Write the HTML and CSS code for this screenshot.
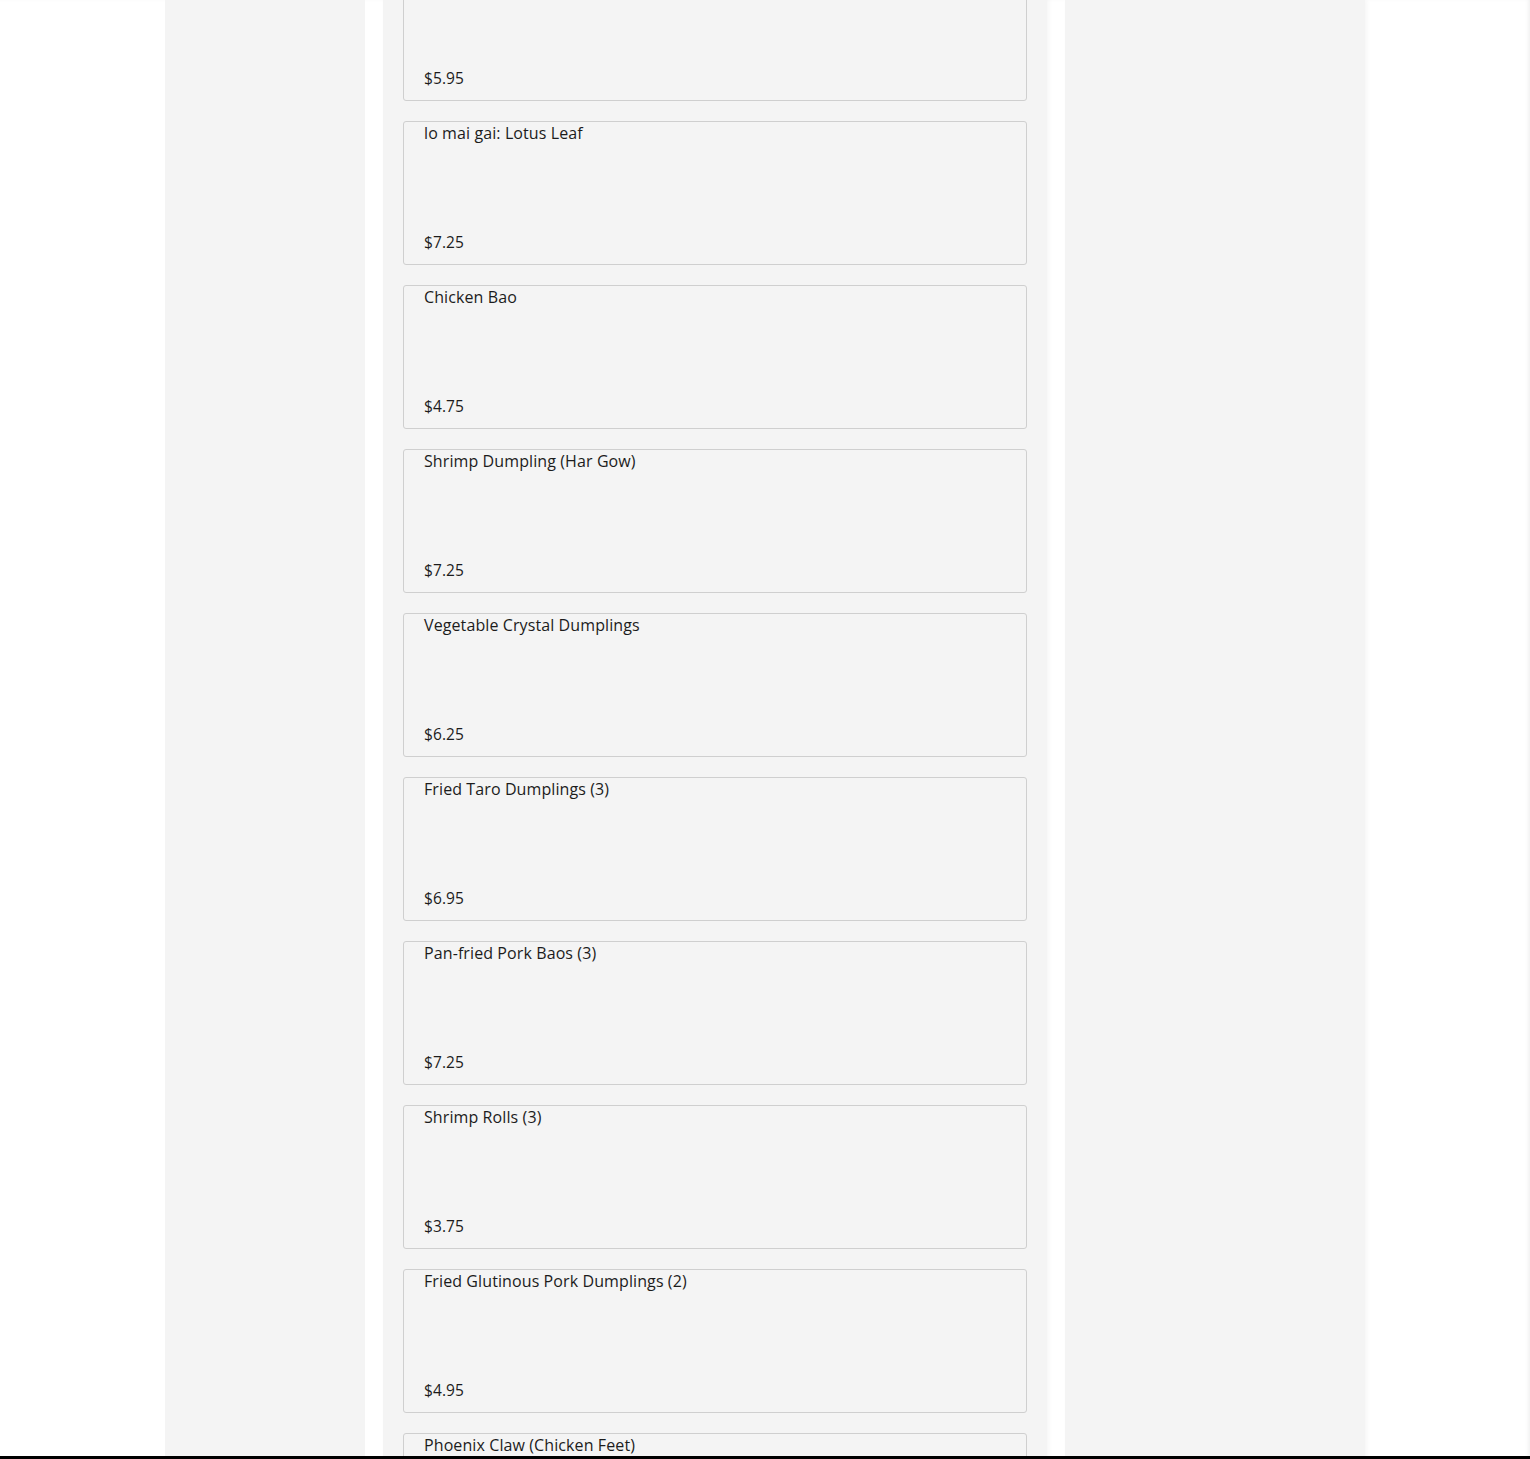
FILE: index.html
```html
<!DOCTYPE html>
<html>
<head>
<meta charset="utf-8">
<link rel="stylesheet" href="styles.css">
</head>
<body>
<div class="page">
  <aside class="side side-left"></aside>
  <main class="menu">
    <div class="item"><div class="name"></div><div class="price">$5.95</div></div>
    <div class="item"><div class="name">lo mai gai: Lotus Leaf</div><div class="price">$7.25</div></div>
    <div class="item"><div class="name">Chicken Bao</div><div class="price">$4.75</div></div>
    <div class="item"><div class="name">Shrimp Dumpling (Har Gow)</div><div class="price">$7.25</div></div>
    <div class="item"><div class="name">Vegetable Crystal Dumplings</div><div class="price">$6.25</div></div>
    <div class="item"><div class="name">Fried Taro Dumplings (3)</div><div class="price">$6.95</div></div>
    <div class="item"><div class="name">Pan-fried Pork Baos (3)</div><div class="price">$7.25</div></div>
    <div class="item"><div class="name">Shrimp Rolls (3)</div><div class="price">$3.75</div></div>
    <div class="item"><div class="name">Fried Glutinous Pork Dumplings (2)</div><div class="price">$4.95</div></div>
    <div class="item"><div class="name">Phoenix Claw (Chicken Feet)</div><div class="price">$5.25</div></div>
  </main>
  <aside class="side side-right"></aside>
</div>
<div class="bottom-bar"></div>
</body>
</html>
```

FILE: styles.css
```css
html, body {
  margin: 0;
  padding: 0;
  background: #ffffff;
  height: 1459px;
  overflow: hidden;
}
body {
  font-family: "Open Sans", "Noto Sans", sans-serif;
  color: #1c1c1c;
}
.page {
  display: flex;
  gap: 18px;
  padding-left: 165px;
  height: 1459px;
  box-shadow: inset -3px 0 4px -2px rgba(0,0,0,0.08);
}
.side {
  background: #f4f4f4;
  height: 100%;
  flex: none;
}
.side-left { width: 200px; }
.side-right { width: 300px; box-shadow: 2px 0 4px rgba(0,0,0,0.04); }
.menu {
  width: 624px;
  flex: none;
  background: #f4f4f4;
  padding: 0 20px;
  display: flex;
  flex-direction: column;
  gap: 20px;
  margin-top: -43px;
  height: 1600px;
  box-shadow: 2px 0 4px rgba(0,0,0,0.04);
}
.item {
  flex: none;
  height: 144px;
  box-sizing: border-box;
  border: 1px solid #cfcfcf;
  border-radius: 3px;
  background: #f4f4f4;
  padding: 1px 20px 12px;
  display: flex;
  flex-direction: column;
  justify-content: space-between;
}
.name, .price {
  font-size: 16px;
  line-height: 20px;
  letter-spacing: 0.1px;
}
.price {
  font-weight: 500;
  font-size: 15.5px;
}
.bottom-bar {
  position: fixed;
  left: 0;
  right: 0;
  bottom: 0;
  height: 3px;
  background: #000;
}
```
